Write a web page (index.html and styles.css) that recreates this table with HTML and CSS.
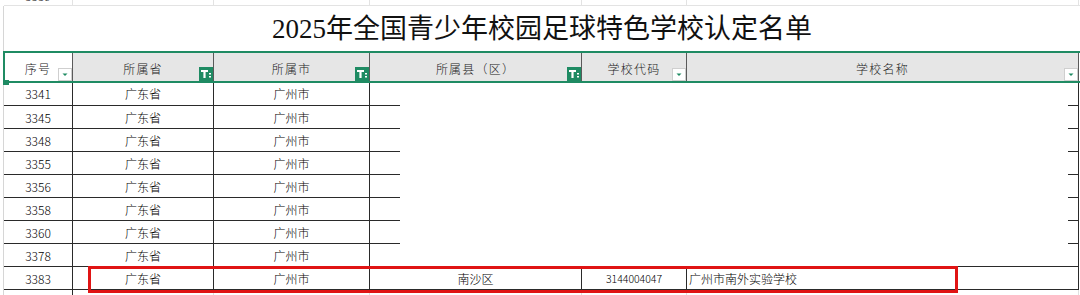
FILE: index.html
```html
<!DOCTYPE html>
<html lang="zh-CN">
<head>
<meta charset="utf-8">
<title>2025年全国青少年校园足球特色学校认定名单</title>
<link rel="stylesheet" href="styles.css">
</head>
<body>
  <!-- tail of the row above the title -->
  <div class="cols prev">
    <div class="cell"><span class="cut">3339</span></div>
    <div class="cell"></div>
    <div class="cell"></div>
    <div class="cell"></div>
    <div class="cell"></div>
    <div class="cell"></div>
  </div>

  <div class="sheet">
    <div class="title">2025年全国青少年校园足球特色学校认定名单</div>

    <div class="cols head">
      <div class="cell on">序号
        <svg class="ico" width="14" height="13" viewBox="0 0 14 13"><rect x=".5" y=".5" width="13" height="12" fill="#fff" stroke="#cfcfcf"/><path d="M4.5 5.5h5L7 8z" fill="#1f8b63"/></svg>
      </div>
      <div class="cell">所属省
        <svg class="ico" width="14" height="14" viewBox="0 0 14 14"><rect width="14" height="14" fill="#1f8b63"/><path d="M2 3h7v2H6.6v6H4.4V5H2z" fill="#fff"/><rect x="10" y="6" width="2" height="1.5" fill="#fff"/><rect x="10" y="9" width="2" height="1.5" fill="#fff"/></svg>
      </div>
      <div class="cell">所属市
        <svg class="ico" width="14" height="14" viewBox="0 0 14 14"><rect width="14" height="14" fill="#1f8b63"/><path d="M2 3h7v2H6.6v6H4.4V5H2z" fill="#fff"/><rect x="10" y="6" width="2" height="1.5" fill="#fff"/><rect x="10" y="9" width="2" height="1.5" fill="#fff"/></svg>
      </div>
      <div class="cell">所属县（区）
        <svg class="ico" width="14" height="14" viewBox="0 0 14 14"><rect width="14" height="14" fill="#1f8b63"/><path d="M2 3h7v2H6.6v6H4.4V5H2z" fill="#fff"/><rect x="10" y="6" width="2" height="1.5" fill="#fff"/><rect x="10" y="9" width="2" height="1.5" fill="#fff"/></svg>
      </div>
      <div class="cell">学校代码
        <svg class="ico" width="14" height="13" viewBox="0 0 14 13"><rect x=".5" y=".5" width="13" height="12" fill="#fff" stroke="#cfcfcf"/><path d="M4.5 5.5h5L7 8z" fill="#1f8b63"/></svg>
      </div>
      <div class="cell">学校名称
        <svg class="ico" width="14" height="13" viewBox="0 0 14 13"><rect x=".5" y=".5" width="13" height="12" fill="#fff" stroke="#cfcfcf"/><path d="M4.5 5.5h5L7 8z" fill="#1f8b63"/></svg>
      </div>
    </div>

    <div class="cols data first">
      <div class="cell">3341</div><div class="cell">广东省</div><div class="cell">广州市</div><div class="cell blank"></div>
    </div>
    <div class="cols data">
      <div class="cell">3345</div><div class="cell">广东省</div><div class="cell">广州市</div><div class="cell blank"></div>
    </div>
    <div class="cols data">
      <div class="cell">3348</div><div class="cell">广东省</div><div class="cell">广州市</div><div class="cell blank"></div>
    </div>
    <div class="cols data">
      <div class="cell">3355</div><div class="cell">广东省</div><div class="cell">广州市</div><div class="cell blank"></div>
    </div>
    <div class="cols data">
      <div class="cell">3356</div><div class="cell">广东省</div><div class="cell">广州市</div><div class="cell blank"></div>
    </div>
    <div class="cols data">
      <div class="cell">3358</div><div class="cell">广东省</div><div class="cell">广州市</div><div class="cell blank"></div>
    </div>
    <div class="cols data">
      <div class="cell">3360</div><div class="cell">广东省</div><div class="cell">广州市</div><div class="cell blank"></div>
    </div>
    <div class="cols data">
      <div class="cell">3378</div><div class="cell">广东省</div><div class="cell">广州市</div><div class="cell blank edge"></div>
    </div>
    <div class="cols data last">
      <div class="cell">3383</div>
      <div class="cell">广东省</div>
      <div class="cell">广州市</div>
      <div class="cell">南沙区</div>
      <div class="cell code">3144004047</div>
      <div class="cell name">广州市南外实验学校</div>
      <div class="mark"></div>
    </div>

    <div class="cols tail">
      <div class="cell"></div><div class="cell"></div><div class="cell"></div>
      <div class="cell"></div><div class="cell"></div><div class="cell"></div>
    </div>
  </div>
</body>
</html>
```

FILE: styles.css
```css
* {
  box-sizing: border-box;
  margin: 0;
  padding: 0;
}

html,
body {
  width: 1080px;
  height: 295px;
  overflow: hidden;
  background: #fff;
}

body {
  font-family: "Noto Sans CJK SC", sans-serif;
  color: #1a1a1a;
}

/* spreadsheet column widths */
.cols {
  display: grid;
  grid-template-columns: 69px 141px 156px 212px 105px 392px;
}

/* row cut off at the top edge */
.prev {
  margin-left: 4px;
  height: 6px;
  border-bottom: 1px solid #e3e3e3;
}

.prev .cell {
  border-right: 1px solid #e3e3e3;
  overflow: hidden;
}

.prev .cut {
  display: block;
  text-align: center;
  font-size: 12px;
  font-weight: 300;
  line-height: 16px;
  margin-top: -12px;
}

.sheet {
  margin-left: 3px;
  border-left: 1px solid #d6d6d6;
}

.title {
  height: 46px;
  line-height: 46px;
  text-align: center;
  font-family: "Liberation Serif", "Noto Sans CJK SC", serif;
  font-size: 27px;
  color: #111;
}

/* header row with selection frame */
.head {
  position: relative;
  height: 30px;
}

.head::after {
  content: "";
  position: absolute;
  left: -1px;
  right: -2px;
  top: -1px;
  bottom: -1px;
  border: 2px solid #1f8b63;
  border-right: none;
  pointer-events: none;
  z-index: 2;
}

.head::before {
  content: "";
  position: absolute;
  left: -1px;
  bottom: -3px;
  width: 6px;
  height: 5px;
  background: #1f8b63;
  z-index: 3;
}

.head .cell {
  position: relative;
  display: flex;
  align-items: center;
  justify-content: center;
  padding-top: 2px;
  background: #e6e6e6;
  border-right: 1px solid #5a5a5a;
  font-size: 12px;
  font-weight: 300;
  letter-spacing: 1.2px;
  color: #222;
}

.head .cell.on {
  background: #fff;
}

.head .ico {
  position: absolute;
  right: 0;
  bottom: 1px;
  display: block;
}

/* data rows */
.data {
  height: 23px;
}

.data.first {
  height: 24px;
}

.data .cell {
  display: flex;
  align-items: center;
  justify-content: center;
  border-right: 1px solid #2a2a2a;
  border-bottom: 1px solid #2a2a2a;
  font-size: 12px;
  font-weight: 300;
  color: #000;
}

.data .blank {
  grid-column: span 3;
  border-bottom: none;
  background:
    linear-gradient(#2a2a2a, #2a2a2a) left bottom / 30px 1px no-repeat,
    linear-gradient(#2a2a2a, #2a2a2a) right bottom / 10px 1px no-repeat;
}

.data .blank.edge {
  border-bottom: 1px solid #2a2a2a;
  background: none;
}

.last {
  position: relative;
}

.last .code {
  font-size: 10.5px;
}

.last .name {
  justify-content: flex-start;
  padding-left: 2px;
}

/* red highlight around the listed school */
.mark {
  position: absolute;
  left: 84px;
  top: -1px;
  width: 870px;
  height: 27px;
  border: 3px solid #e01414;
  pointer-events: none;
}

.tail {
  height: 6px;
}

.tail .cell {
  border-right: 1px solid #e0e0e0;
  border-bottom: 1px solid #e0e0e0;
}

.tail .cell:first-child {
  border-right-color: #2a2a2a;
}
```
